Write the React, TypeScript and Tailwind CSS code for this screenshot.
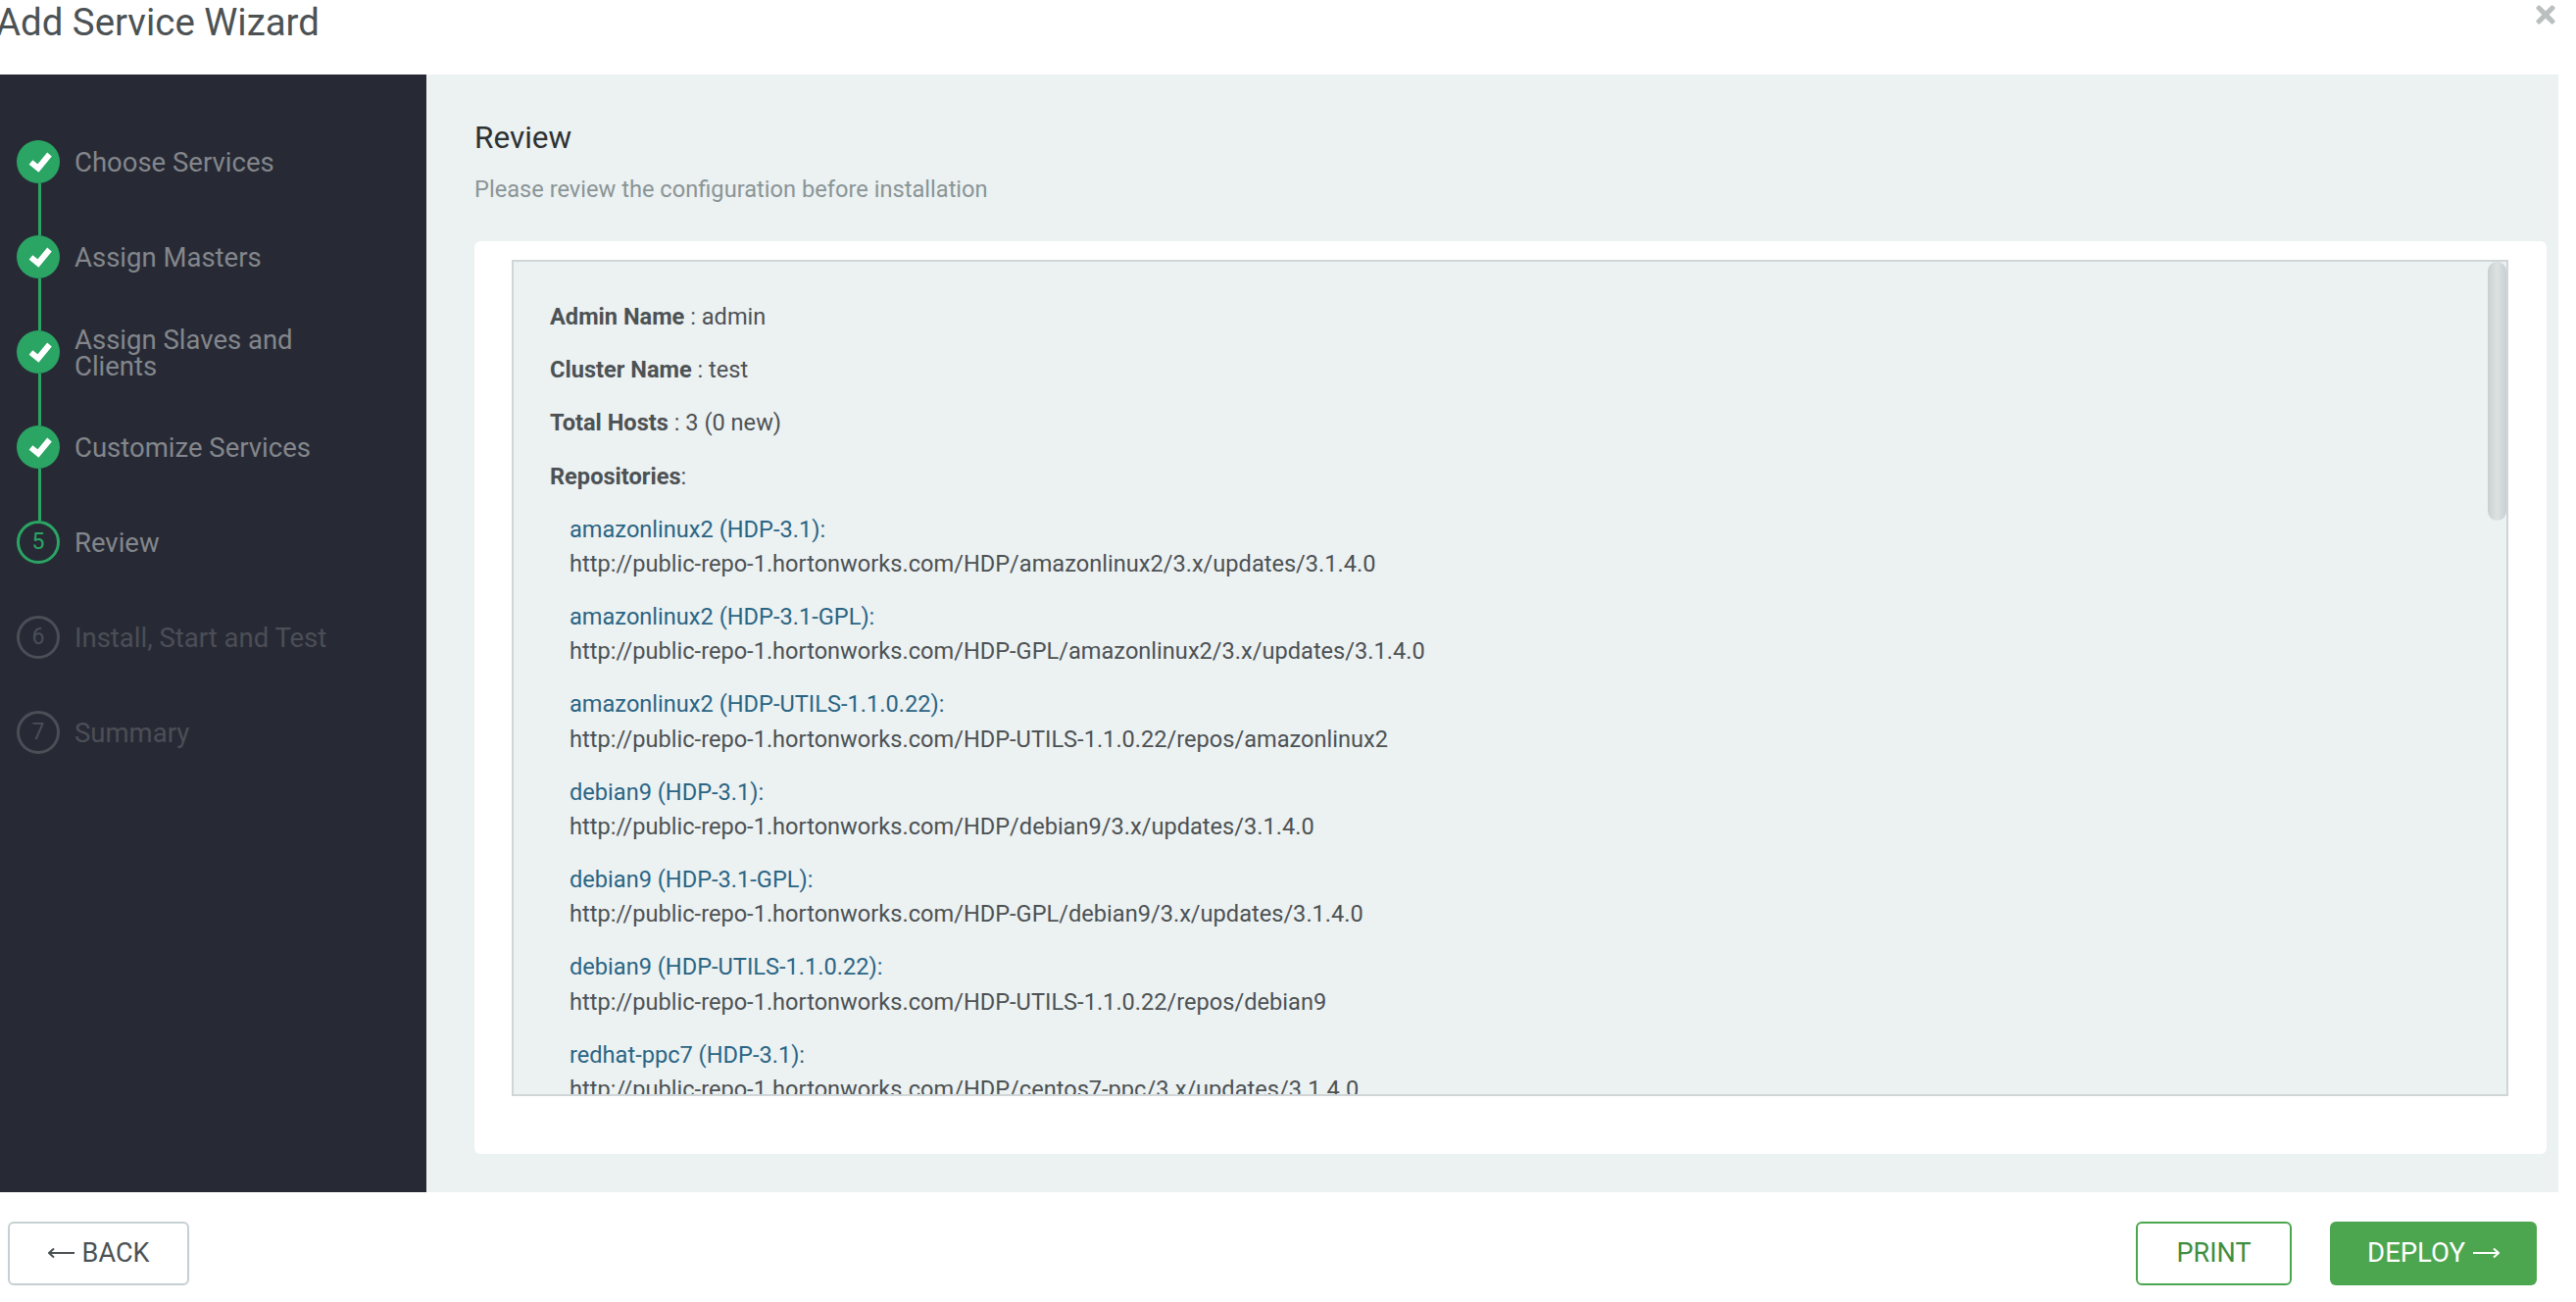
import React from 'react';
import { FaTimes } from 'react-icons/fa';

const steps = [
  { n: 1, label: 'Choose Services', state: 'done' },
  { n: 2, label: 'Assign Masters', state: 'done' },
  { n: 3, label: 'Assign Slaves and Clients', state: 'done' },
  { n: 4, label: 'Customize Services', state: 'done' },
  { n: 5, label: 'Review', state: 'active' },
  { n: 6, label: 'Install, Start and Test', state: 'todo' },
  { n: 7, label: 'Summary', state: 'todo' },
];

const repos = [
  ['amazonlinux2 (HDP-3.1):', 'http://public-repo-1.hortonworks.com/HDP/amazonlinux2/3.x/updates/3.1.4.0'],
  ['amazonlinux2 (HDP-3.1-GPL):', 'http://public-repo-1.hortonworks.com/HDP-GPL/amazonlinux2/3.x/updates/3.1.4.0'],
  ['amazonlinux2 (HDP-UTILS-1.1.0.22):', 'http://public-repo-1.hortonworks.com/HDP-UTILS-1.1.0.22/repos/amazonlinux2'],
  ['debian9 (HDP-3.1):', 'http://public-repo-1.hortonworks.com/HDP/debian9/3.x/updates/3.1.4.0'],
  ['debian9 (HDP-3.1-GPL):', 'http://public-repo-1.hortonworks.com/HDP-GPL/debian9/3.x/updates/3.1.4.0'],
  ['debian9 (HDP-UTILS-1.1.0.22):', 'http://public-repo-1.hortonworks.com/HDP-UTILS-1.1.0.22/repos/debian9'],
  ['redhat-ppc7 (HDP-3.1):', 'http://public-repo-1.hortonworks.com/HDP/centos7-ppc/3.x/updates/3.1.4.0'],
];

const Arrow: React.FC<{ flip?: boolean }> = ({ flip }) => (
  <svg width="27" height="14" viewBox="0 0 27 14" fill="none" stroke="currentColor" strokeWidth="2" className={flip ? 'rotate-180' : ''}>
    <path d="M0 7H26M21 2.5L26 7L21 11.5" />
  </svg>
);

const Check = () => (
  <svg width="24" height="21" viewBox="0 0 24 21" fill="none" stroke="white" strokeWidth="6" className="ml-[3px]">
    <path d="M2.5 10.5L10 16.5L21.5 2.5" />
  </svg>
);

const Step: React.FC<{ n: number; label: string; state: string }> = ({ n, label, state }) => (
  <div className="flex gap-[15px]">
    <div className="flex flex-col items-center w-[44px]">
      {state === 'done' && (
        <div className="flex items-center justify-center w-[44px] h-[44px] rounded-full bg-[#2aa564]">
          <Check />
        </div>
      )}
      {state === 'active' && (
        <div className="flex items-center justify-center w-[44px] h-[44px] rounded-full border-[3px] border-[#2aa564] text-[#2aa564] text-[23px]">
          {n}
        </div>
      )}
      {state === 'todo' && (
        <div className="flex items-center justify-center w-[44px] h-[44px] rounded-full border-[3px] border-[#4b4e55] text-[#4b4e55] text-[23px]">
          {n}
        </div>
      )}
      <div className={`w-[3px] h-[53px] ml-[2px] ${state === 'done' ? 'bg-[#2aa564]' : 'bg-transparent'}`} />
    </div>
    <div
      className={`flex items-center h-[44px] w-[270px] pt-[1px] text-[27.5px] leading-[27px] ${
        state === 'todo' ? 'text-[#4b4e55]' : 'text-[#83868b]'
      }`}
    >
      {label}
    </div>
  </div>
);

export default function App() {
  return (
    <div className="flex flex-col w-[2628px] h-[1328px] overflow-hidden bg-white font-['Roboto',sans-serif]">
      {/* Header */}
      <div className="relative flex items-center shrink-0 h-[76px] pb-[30px] -ml-[4px]">
        <span className="text-[38.4px] leading-[44px] text-[#4c5254] whitespace-nowrap">Add Service Wizard</span>
        <FaTimes className="absolute right-[17px] top-[1px] w-[28px] h-[28px] text-[#b9c0bf]" />
      </div>

      {/* Body */}
      <div className="flex h-[1140px] shrink-0 pr-[18px]">
        <div className="w-[435px] shrink-0 bg-[#272a35] pt-[67px] pl-[17px]">
          {steps.map((s) => (
            <Step key={s.n} n={s.n} label={s.label} state={s.state} />
          ))}
        </div>

        <div className="flex flex-col flex-1 bg-[#ecf1f2] pl-[49px] pr-[12px]">
          <h2 className="mt-[46px] text-[31.5px] leading-[38px] text-[#2d3233]">Review</h2>
          <p className="mt-[16px] text-[23.65px] leading-[34px] text-[#8a9596]">Please review the configuration before installation</p>
          <div className="mt-[36px] h-[931px] bg-white rounded-[6px] pt-[19px] pl-[38px] pr-[39px]">
            <div className="relative h-[853px] bg-[#ecf1f2] border-2 border-[#d0d6d8] overflow-hidden pl-[37px] pt-[39px] text-[23.6px] leading-[35.2px] text-[#4c5254]">
              <p className="mb-[19px]"><b>Admin Name</b> : admin</p>
              <p className="mb-[19px]"><b>Cluster Name</b> : test</p>
              <p className="mb-[19px]"><b>Total Hosts</b> : 3 (0 new)</p>
              <p className="mb-[19px]"><b>Repositories</b>:</p>
              <div className="pl-[20px]">
                {repos.map(([name, url]) => (
                  <div key={name} className="mb-[18.9px]">
                    <div className="text-[#2a6584]">{name}</div>
                    <div>{url}</div>
                  </div>
                ))}
              </div>
              <div className="absolute right-0 top-0 w-[19px] h-[264px] rounded-full bg-gradient-to-r from-[#c9d0d1] via-[#dce1e2] to-[#c9d0d1]" />
            </div>
          </div>
        </div>
      </div>

      {/* Footer */}
      <div className="flex items-center justify-between flex-1 pl-[8px] pr-[40px] pt-[12px]">
        <button className="flex items-center justify-center gap-[8px] w-[185px] h-[65px] rounded-[6px] border-2 border-[#c6cfd1] text-[#4c5254] text-[27px]">
          <Arrow flip />
          BACK
        </button>
        <div className="flex gap-[39px]">
          <button className="flex items-center justify-center w-[159px] h-[65px] rounded-[6px] border-2 border-[#4ca64f] text-[#3e8e41] text-[27px]">
            PRINT
          </button>
          <button className="flex items-center justify-center gap-[8px] w-[211px] h-[65px] rounded-[6px] bg-[#4ca64f] text-white text-[27.5px]">
            DEPLOY
            <Arrow />
          </button>
        </div>
      </div>
    </div>
  );
}
